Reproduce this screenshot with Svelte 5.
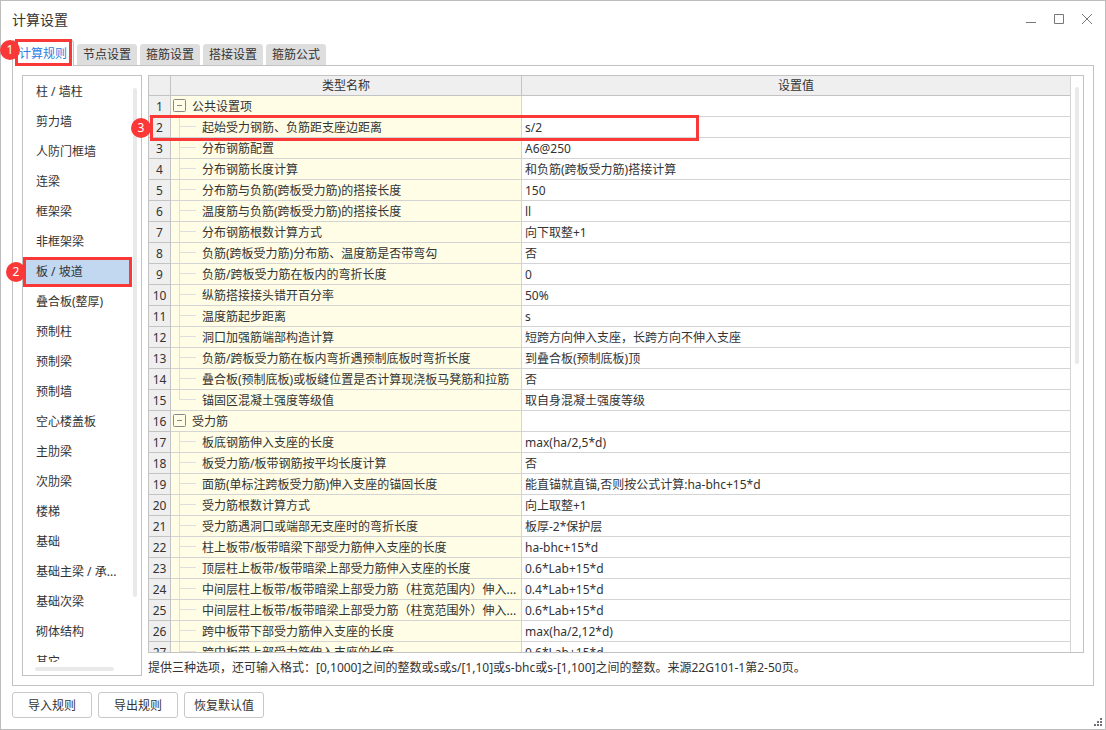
<script>
  const tabs = ['计算规则', '节点设置', '箍筋设置', '搭接设置', '箍筋公式'];
  const categories = [
    '柱 / 墙柱', '剪力墙', '人防门框墙', '连梁', '框架梁', '非框架梁', '板 / 坡道',
    '叠合板(整厚)', '预制柱', '预制梁', '预制墙', '空心楼盖板', '主肋梁', '次肋梁',
    '楼梯', '基础', '基础主梁 / 承...', '基础次梁', '砌体结构', '其它'
  ];
  const rows = [
    { name: '公共设置项', group: true },
    { name: '起始受力钢筋、负筋距支座边距离', value: 's/2' },
    { name: '分布钢筋配置', value: 'A6@250' },
    { name: '分布钢筋长度计算', value: '和负筋(跨板受力筋)搭接计算' },
    { name: '分布筋与负筋(跨板受力筋)的搭接长度', value: '150' },
    { name: '温度筋与负筋(跨板受力筋)的搭接长度', value: 'll' },
    { name: '分布钢筋根数计算方式', value: '向下取整+1' },
    { name: '负筋(跨板受力筋)分布筋、温度筋是否带弯勾', value: '否' },
    { name: '负筋/跨板受力筋在板内的弯折长度', value: '0' },
    { name: '纵筋搭接接头错开百分率', value: '50%' },
    { name: '温度筋起步距离', value: 's' },
    { name: '洞口加强筋端部构造计算', value: '短跨方向伸入支座，长跨方向不伸入支座' },
    { name: '负筋/跨板受力筋在板内弯折遇预制底板时弯折长度', value: '到叠合板(预制底板)顶' },
    { name: '叠合板(预制底板)或板缝位置是否计算现浇板马凳筋和拉筋', value: '否' },
    { name: '锚固区混凝土强度等级值', value: '取自身混凝土强度等级', last: true },
    { name: '受力筋', group: true },
    { name: '板底钢筋伸入支座的长度', value: 'max(ha/2,5*d)' },
    { name: '板受力筋/板带钢筋按平均长度计算', value: '否' },
    { name: '面筋(单标注跨板受力筋)伸入支座的锚固长度', value: '能直锚就直锚,否则按公式计算:ha-bhc+15*d' },
    { name: '受力筋根数计算方式', value: '向上取整+1' },
    { name: '受力筋遇洞口或端部无支座时的弯折长度', value: '板厚-2*保护层' },
    { name: '柱上板带/板带暗梁下部受力筋伸入支座的长度', value: 'ha-bhc+15*d' },
    { name: '顶层柱上板带/板带暗梁上部受力筋伸入支座的长度', value: '0.6*Lab+15*d' },
    { name: '中间层柱上板带/板带暗梁上部受力筋（柱宽范围内）伸入...', value: '0.4*Lab+15*d' },
    { name: '中间层柱上板带/板带暗梁上部受力筋（柱宽范围外）伸入...', value: '0.6*Lab+15*d' },
    { name: '跨中板带下部受力筋伸入支座的长度', value: 'max(ha/2,12*d)' },
    { name: '跨中板带上部受力筋伸入支座的长度', value: '0.6*Lab+15*d' }
  ];
  let activeTab = $state(0);
  let activeCategory = $state(6);
</script>

<main class="dialog" lang="zh-CN">
  <header>
    <h1>计算设置</h1>
    <div class="window-buttons">
      <button aria-label="最小化"><svg width="12" height="12" viewBox="0 0 12 12"><path d="M1 10.5H11" /></svg></button>
      <button aria-label="最大化"><svg width="12" height="12" viewBox="0 0 12 12"><path d="M1.5 2.5H10.5V11.5H1.5Z" /></svg></button>
      <button aria-label="关闭"><svg width="12" height="12" viewBox="0 0 12 12"><path d="M1 2L11 12M11 2L1 12" /></svg></button>
    </div>
  </header>

  <nav class="tabs">
    {#each tabs as tab, i}
      <button class="tab" class:active={activeTab === i} onclick={() => (activeTab = i)}>{tab}</button>
    {/each}
    <div class="mark mark-tab"><span class="badge">1</span></div>
  </nav>

  <section class="panel">
    <aside>
      <div class="categories">
        {#each categories as category, i}
          <button class="category" class:selected={activeCategory === i} onclick={() => (activeCategory = i)}>{category}</button>
        {/each}
      </div>
      <div class="bar bar-side"></div>
      <div class="bar bar-bottom"></div>
      <div class="mark mark-category"><span class="badge">2</span></div>
    </aside>

    <div class="content">
      <div class="grid">
        <div class="rows">
          <table>
            <colgroup><col class="c-num" /><col class="c-name" /><col /></colgroup>
            <thead>
              <tr><th></th><th>类型名称</th><th>设置值</th></tr>
            </thead>
            <tbody>
              {#each rows as row, i}
                <tr>
                  <td class="num">{i + 1}</td>
                  <td class="name">
                    {#if row.group}
                      <div class="group">
                        <button class="toggle" aria-label="折叠"><svg width="13" height="13" viewBox="0 0 13 13"><rect x=".5" y=".5" width="12" height="12" rx="1" /><path d="M4 6.5H9" /></svg></button>
                        <span>{row.name}</span>
                      </div>
                    {:else}
                      <div class="leaf" class:last={row.last}>{row.name}</div>
                    {/if}
                  </td>
                  <td class="value">{row.value ?? ''}</td>
                </tr>
              {/each}
            </tbody>
          </table>
        </div>
        <div class="track"><div class="thumb"></div></div>
        <div class="mark mark-row"><span class="badge">3</span></div>
      </div>
      <p class="hint">提供三种选项，还可输入格式：[0,1000]之间的整数或s或s/[1,10]或s-bhc或s-[1,100]之间的整数。来源22G101-1第2-50页。</p>
    </div>
  </section>

  <footer>
    <button class="action">导入规则</button>
    <button class="action">导出规则</button>
    <button class="action">恢复默认值</button>
    <svg class="grip" width="8" height="8" viewBox="0 0 8 8"><path d="M6 0h2v2H6zM3 3h2v2H3zM6 3h2v2H6zM0 6h2v2H0zM3 6h2v2H3zM6 6h2v2H6z" /></svg>
  </footer>
</main>

<style>
  :global(body) { margin: 0; background: #fff; }
  * { box-sizing: border-box; }
  button {
    font: inherit;
    color: inherit;
    margin: 0;
    padding: 0;
    border: 0;
    background: none;
  }
  .dialog {
    display: flex;
    flex-direction: column;
    height: 100vh;
    padding: 0 11px;
    border: 1px solid #bdbdbd;
    background: #fff;
    color: #333;
    font: 12px/20px "Noto Sans", "Noto Sans CJK SC", sans-serif;
  }
  header {
    display: flex;
    justify-content: space-between;
    height: 38px;
    flex: none;
  }
  h1 { margin: 0; font-size: 14px; font-weight: 400; line-height: 38px; }
  .window-buttons { display: flex; gap: 16px; padding: 11px 1px 0 0; }
  .window-buttons button { width: 12px; height: 12px; }
  .window-buttons svg { display: block; overflow: visible; fill: none; stroke: #777; }

  .tabs {
    position: relative;
    display: flex;
    align-items: flex-end;
    gap: 3px;
    height: 27px;
    flex: none;
    margin-bottom: -1px;
    padding-bottom: 1px;
    z-index: 1;
  }
  .tab {
    width: 60px;
    height: 21px;
    border-radius: 3px 3px 0 0;
    background: #dedede;
  }
  .tab.active {
    width: 62px;
    height: 26px;
    margin-bottom: -1px;
    border: 1px solid #c3c3c3;
    border-bottom: 0;
    background: #fff;
    color: #2a80e4;
  }

  .panel {
    display: flex;
    gap: 6px;
    flex: 1;
    min-height: 0;
    padding: 9px;
    border: 1px solid #c3c3c3;
  }
  aside {
    position: relative;
    width: 120px;
    flex: none;
    padding: 1px 9px 13px 0;
    border: 1px solid #c3c3c3;
  }
  .categories { height: 100%; overflow: hidden; }
  .category {
    display: block;
    width: 100%;
    height: 30px;
    padding-left: 13px;
    text-align: left;
    white-space: nowrap;
  }
  .category.selected { background: #c1d8f0; }
  .bar { position: absolute; border-radius: 2px; background: #e9e9e9; }
  .bar-side { top: 12px; right: 4px; width: 4px; height: 85%; }
  .bar-bottom { left: 12px; bottom: 4px; width: 79px; height: 4px; }

  .content { display: flex; flex-direction: column; flex: 1; min-width: 0; }
  .grid {
    position: relative;
    display: flex;
    flex: 1;
    min-height: 0;
    border: 1px solid #c3c3c3;
  }
  .rows { flex: 1; min-width: 0; overflow: hidden; border-right: 1px solid #d4d4d4; }
  .track { width: 12px; flex: none; padding: 11px 4px; }
  .thumb { height: 50%; border-radius: 2px; background: #e9e9e9; }
  table {
    width: 100%;
    table-layout: fixed;
    border-collapse: separate;
    border-spacing: 0;
  }
  .c-num { width: 22px; }
  .c-name { width: 351px; }
  th, td {
    height: 21px;
    padding: 0;
    border: solid #d4d4d4;
    border-width: 0 1px 1px 0;
    line-height: 18px;
    white-space: nowrap;
  }
  th {
    height: 20px;
    padding-top: 1px;
    font-weight: 400;
    background: #efefef;
    border-color: #c3c3c3;
  }
  th:last-child, td:last-child { border-right: 0; }
  .num { padding-top: 2px; text-align: center; background: #efefef; border-color: #c3c3c3; }
  .name { background: #fffde6; overflow: hidden; }
  .value { padding: 2px 0 0 3px; }
  .group { display: flex; gap: 6px; height: 20px; padding-left: 2px; }
  .group span { padding-top: 2px; }
  .toggle { height: 13px; margin-top: 3px; }
  .toggle svg { display: block; fill: #fffde6; stroke: #888; }
  .leaf {
    height: 20px;
    padding: 2px 0 0 31px;
    background:
      linear-gradient(#dedede, #dedede) 8px 9px / 17px 1px no-repeat,
      linear-gradient(#dedede, #dedede) 8px 0 / 1px 20px no-repeat;
  }
  .leaf.last {
    background:
      linear-gradient(#dedede, #dedede) 8px 9px / 17px 1px no-repeat,
      linear-gradient(#dedede, #dedede) 8px 0 / 1px 10px no-repeat;
  }
  .hint { margin: 0; padding-top: 5px; height: 23px; line-height: 20px; white-space: nowrap; }

  footer {
    position: relative;
    display: flex;
    gap: 6px;
    flex: none;
    padding: 6px 0 11px;
  }
  .action {
    width: 80px;
    height: 26px;
    padding-top: 2px;
    border: 1px solid #c8c8c8;
    border-radius: 3px;
    background: #fff;
  }
  .grip { position: absolute; right: -8px; bottom: 3px; fill: #6e717c; }

  .mark { position: absolute; border: 3px solid #fb3838; pointer-events: none; }
  .badge {
    position: absolute;
    width: 20px;
    height: 20px;
    border-radius: 50%;
    background: #fb3838;
    color: #fff;
    line-height: 20px;
    text-align: center;
  }
  .mark-tab { left: 3px; top: 0; width: 57px; height: 27px; }
  .mark-tab .badge { left: -18px; top: -2px; }
  .mark-category { left: 0; top: 181px; width: 109px; height: 30px; }
  .mark-category .badge { left: -20px; top: 2px; }
  .mark-row { left: 1px; top: 39px; width: 549px; height: 26px; }
  .mark-row .badge { left: -22px; top: 0; }
</style>
